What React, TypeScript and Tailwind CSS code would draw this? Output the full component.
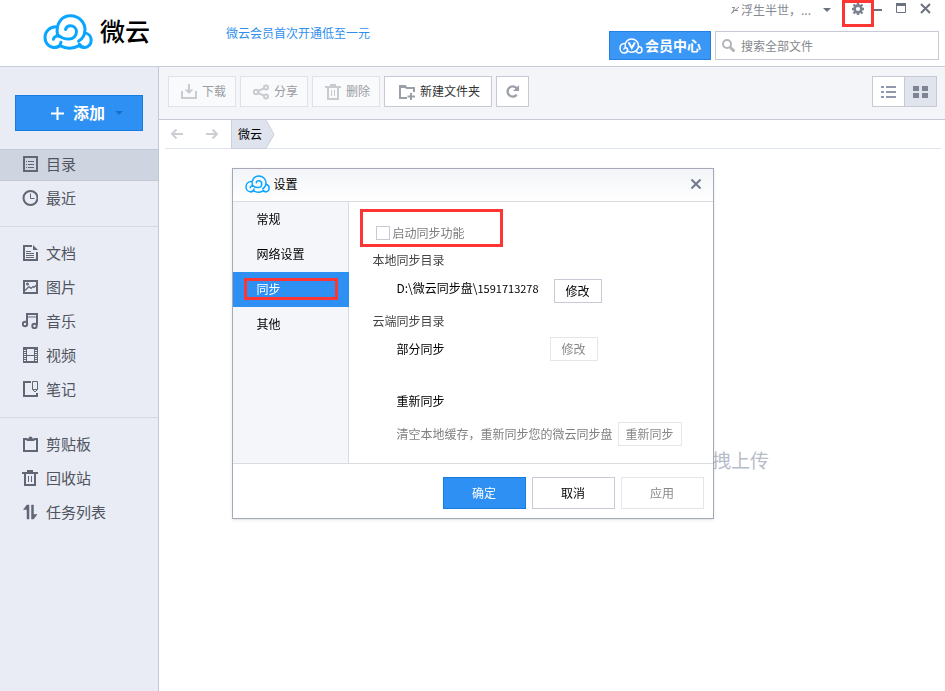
import type { ReactNode } from "react";
import clsx from "clsx";

function CloudLogo({ className }: { className?: string }) {
  return (
    <svg
      className={className}
      viewBox="0 0 50 36"
      fill="none"
      stroke="#0aa5ff"
      strokeWidth="3"
      strokeLinecap="round"
      aria-hidden="true"
    >
      <path d="M13 12.800C6.500 13 2 17.600 2 23.300c0 5.800 4 10.200 9.200 10.200 3.600 0 6.300-2.300 6.800-5.300M16.500 22.500c-1.200-.7-2.600-.8-3.800-.2-1.400.6-2.200 1.700-2.300 3" />
      <path d="M14.500 20.500C12.600 9.500 18.500 1.800 27.500 1.800c8.200 0 14.500 6.200 14.500 14 0 5.300-2.300 9-6.500 11.500" />
      <path d="M22.500 15.500c.6-2.300 2.300-3.800 4.800-3.800 3.600 0 6.200 2.700 6.200 6.100 0 4.400-3.500 7.300-7.800 7.300-4.700 0-9-2.500-11.200-4.600" />
      <path d="M41.500 18.600c4 .8 6.700 3.800 6.700 7.600 0 4-2.800 7.200-6.500 7.200-2.500 0-4.200-1.200-5.200-3.200" />
      <path d="M11.200 33.500c2.600 0 4.400-.6 6-1.700 5.500 3.100 13 3.200 18.800-.2 1.500 1.300 3.400 1.900 5.700 1.800" />
    </svg>
  );
}

function VipCloud() {
  return (
    <svg width="24" height="16" viewBox="0 0 24 16" fill="none" stroke="#fff" strokeWidth="1.500" strokeLinecap="round" aria-hidden="true">
      <path d="M5.500 5.500C2.800 5.600 1 7.700 1 10.300 1 13 2.900 15 5.300 15c2 0 3.300-1.300 3.300-2.900 0-1.400-1-2.300-2.100-2.300-.9 0-1.500.5-1.600 1.200" />
      <path d="M6.200 8.500C5.500 4.300 8.600 1 12.600 1s6.900 3 6.900 6.700-3 6.500-6.900 6.500c-1.600 0-3-.4-4.100-1.200" />
      <path d="M19.500 8.800c2 .1 3.500 1.400 3.500 3.200 0 1.700-1.400 3-3.100 3-1.300 0-2.100-.7-2.500-1.700" />
      <path d="M10 5l2.800 5L15.600 5" strokeWidth="2" />
    </svg>
  );
}

function Icon({ children, size = 16 }: { children: ReactNode; size?: number }) {
  return (
    <svg
      className="shrink-0"
      width={size}
      height={size}
      viewBox="0 0 16 16"
      fill="none"
      stroke="currentColor"
      strokeWidth="2"
      aria-hidden="true"
    >
      {children}
    </svg>
  );
}

const trash = (
  <>
    <path d="M0 3h16M5 1h6M3 3v12h10V3" />
    <path d="M6.500 6v6M9.500 6v6" strokeWidth="1" />
  </>
);

const navGroups: { label: string; icon: ReactNode }[][] = [
  [
    {
      label: "目录",
      icon: (
        <>
          <path d="M2 1h13v14H2z" />
          <path d="M4 5.500h1M6 5.500h6M4 8.500h1M6 8.500h6M4 11.500h1M6 11.500h6" strokeWidth="1" />
        </>
      ),
    },
    {
      label: "最近",
      icon: (
        <>
          <circle cx="8.500" cy="8" r="7" strokeWidth="2" />
          <path d="M8.500 3.500v5h4" strokeWidth="1" />
        </>
      ),
    },
  ],
  [
    {
      label: "文档",
      icon: (
        <>
          <path d="M10 1H2v14h13V7" />
          <path d="M11 0l5 5h-5z" fill="currentColor" stroke="none" />
          <path d="M4 6.500h5M4 8.500h8M4 10.500h8M4 12.500h8" strokeWidth="1" />
        </>
      ),
    },
    {
      label: "图片",
      icon: (
        <>
          <path d="M2 2h13v12H2z" />
          <path d="M3 11.500l4-4 2 2 2-2 1 1 3-3" strokeWidth="1.200" />
          <circle cx="5.500" cy="5" r="1.500" fill="currentColor" stroke="none" />
        </>
      ),
    },
    {
      label: "音乐",
      icon: (
        <>
          <path d="M5 11V1h10v11" />
          <path d="M5 4h10" strokeWidth="1" />
          <circle cx="3" cy="11" r="2.200" />
          <circle cx="12.500" cy="13" r="2.200" />
        </>
      ),
    },
    {
      label: "视频",
      icon: (
        <>
          <path d="M1 1h15M1 15h15" />
          <path d="M4.500 1v14M12.500 1v14M4 8.500h9" strokeWidth="1" />
          <path d="M3 2v13M14 2v13" strokeDasharray="1 1" />
          <path d="M1.500 1v14M15.500 1v14" strokeWidth="1" />
        </>
      ),
    },
    {
      label: "笔记",
      icon: (
        <>
          <path d="M9 1H2v14h13v-3" />
          <path d="M10.500 .500h5v8L13 11l-2.500-2.500zM10.500 8.500h5" strokeWidth="1" />
        </>
      ),
    },
  ],
  [
    {
      label: "剪贴板",
      icon: (
        <>
          <path d="M5 3H2v12h13V3h-3" />
          <path d="M4.500 5V2.500h2a2 2 0 0 1 4 0h2V5z" fill="currentColor" stroke="none" />
        </>
      ),
    },
    { label: "回收站", icon: trash },
    {
      label: "任务列表",
      icon: (
        <path
          d="M5 15V1h2v14zM5 1v4.500H1.500zM9.500 1h2v14h-2zM11.500 15v-4.500H15z"
          fill="currentColor"
          stroke="currentColor"
          strokeWidth=".500"
        />
      ),
    },
  ],
];

const settingsTabs = ["常规", "网络设置", "同步", "其他"];

function ToolButton({
  label,
  icon,
  disabled = false,
}: {
  label: string;
  icon: ReactNode;
  disabled?: boolean;
}) {
  return (
    <button
      type="button"
      disabled={disabled}
      className={clsx(
        "flex h-[31px] items-center gap-[5px] border text-xs whitespace-nowrap",
        disabled
          ? "border-[#e0e2e8] bg-[#f9fafc] pr-[9px] pl-3 text-[#9a9ca2]"
          : "border-[#c6cad5] bg-white pr-[11px] pl-[14px] text-[#333]",
      )}
    >
      <span className={disabled ? "text-[#c9cbd1]" : "text-[#9b9fa8]"}>{icon}</span>
      <span className="pb-[2px]">{label}</span>
    </button>
  );
}

function SmallButton({ label, disabled = false }: { label: string; disabled?: boolean }) {
  return (
    <button
      type="button"
      disabled={disabled}
      className={clsx(
        "h-6 shrink-0 border bg-white px-[7px] text-xs",
        label.length === 2 && "w-12",
        disabled ? "border-[#e4e6ea] text-[#888]" : "border-[#c6cad5] text-black",
      )}
    >
      {label}
    </button>
  );
}

function Header() {
  return (
    <header className="flex h-[67px] justify-between border-b border-[#c8ccd8] bg-white">
      <div className="flex items-center">
        <div className="flex items-center gap-[7px] pb-[3px] pl-[43px]">
          <CloudLogo className="h-9 w-[50px]" />
          <h1 className="pb-[3px] text-[25px] leading-8 font-medium text-black">微云</h1>
        </div>
        <a href="#vip" className="ml-[76px] text-xs text-[#2f8fee]">
          微云会员首次开通低至一元
        </a>
      </div>

      <div className="flex flex-col items-end pr-[6px]">
        <div className="flex h-[27px] items-start pr-2 text-[#6c7282]">
          <button type="button" className="mr-[11px] flex h-5 items-center text-xs text-[#858993]">
            <svg width="10" height="10" viewBox="0 0 10 10" fill="none" stroke="currentColor" className="mr-px" aria-hidden="true">
              <path d="M2 2.500h2.500L2.500 8M1 8.500L9 2M5 5.500h3" />
            </svg>
            浮生半世，...
            <svg width="8" height="4" viewBox="0 0 8 4" fill="#6c7282" className="ml-3" aria-hidden="true">
              <path d="M0 0h8L4 4z" />
            </svg>
          </button>
          <button
            type="button"
            aria-label="设置"
            className="flex h-[27px] w-8 items-start justify-center border-[3px] border-[#fc3535] text-[#7c8190]"
          >
            <svg width="12" height="12" viewBox="0 0 12 12" fill="none" stroke="currentColor" aria-hidden="true">
              <circle cx="6" cy="6" r="3.400" strokeWidth="2.600" />
              <path
                d="M6 0v2M6 10v2M0 6h2M10 6h2M1.500 1.500l1.700 1.700M8.800 8.800l1.700 1.700M1.500 10.500l1.700-1.700M8.800 3.200l1.700-1.700"
                strokeWidth="2.400"
              />
            </svg>
          </button>
          <button type="button" aria-label="最小化" className="mt-[3px]">
            <svg width="8" height="11" viewBox="0 0 8 11" fill="currentColor" aria-hidden="true">
              <path d="M0 6h8v2H0z" />
            </svg>
          </button>
          <button type="button" aria-label="最大化" className="mt-[3px] ml-[14px]">
            <svg width="10" height="11" viewBox="0 0 10 11" fill="none" stroke="currentColor" aria-hidden="true">
              <path d="M.500 .500h9v9h-9z" />
              <path d="M0 1.500h10" strokeWidth="3" />
            </svg>
          </button>
          <button type="button" aria-label="关闭" className="mt-[3px] ml-[14px]">
            <svg width="11" height="11" viewBox="0 0 11 11" fill="none" stroke="currentColor" strokeWidth="2" aria-hidden="true">
              <path d="M1 1l9 9M10 1l-9 9" />
            </svg>
          </button>
        </div>

        <div className="mt-1 flex gap-1">
          <button
            type="button"
            className="flex h-[29px] w-[102px] items-center justify-center gap-[2px] border border-[#2381e6] bg-[#3b97f6] text-sm font-bold text-white"
          >
            <VipCloud />
            <span className="pb-[2px]">会员中心</span>
          </button>
          <label className="flex h-[29px] w-56 items-center gap-[6px] border border-[#c6cad5] bg-white px-[6px]">
            <svg width="13" height="13" viewBox="0 0 13 13" fill="none" stroke="#b3b5ba" strokeWidth="2" aria-hidden="true">
              <circle cx="5" cy="5" r="4" />
              <path d="M8 8l4.500 4.500" strokeWidth="3" />
            </svg>
            <input
              type="search"
              aria-label="搜索全部文件"
              placeholder="搜索全部文件"
              className="min-w-0 flex-1 text-xs outline-none placeholder:text-[#85878c]"
            />
          </label>
        </div>
      </div>
    </header>
  );
}

function Sidebar() {
  return (
    <aside className="w-[159px] shrink-0 border-r border-[#c3c7d2] bg-[#e9ecf4] pt-7">
      <div className="px-[15px]">
        <button
          type="button"
          className="flex h-9 w-full items-center justify-center border border-[#187be0] bg-[#2f90f3] pl-4 text-base font-bold text-white"
        >
          <svg width="13" height="13" viewBox="0 0 13 13" stroke="#fff" strokeWidth="2" className="mr-[9px]" aria-hidden="true">
            <path d="M6.500 0v13M0 6.500h13" />
          </svg>
          <span className="pb-[2px]">添加</span>
          <svg width="8" height="4" viewBox="0 0 8 4" fill="#1a6fca" className="ml-[10px]" aria-hidden="true">
            <path d="M0 0h8L4 4z" />
          </svg>
        </button>
      </div>

      <nav className="mt-[18px] text-[15px] text-[#50545f]">
        {navGroups.map((group, i) => (
          <ul
            key={group[0].label}
            className={clsx(
              "pb-[11px]",
              i > 0 && "pt-[9px]",
              i < navGroups.length - 1 && "border-b border-[#d5d9e2]",
            )}
          >
            {group.map((item) => (
              <li key={item.label}>
                <a
                  href="#nav"
                  className={clsx(
                    "flex items-center gap-2 pl-[22px]",
                    item.label === "目录"
                      ? "h-8 border-y border-[#c3c9d6] bg-[#ced4e0] pb-[2px]"
                      : "h-[34px]",
                  )}
                >
                  <span className="text-[#626775]">
                    <Icon>{item.icon}</Icon>
                  </span>
                  {item.label}
                </a>
              </li>
            ))}
          </ul>
        ))}
      </nav>
    </aside>
  );
}

function Toolbar() {
  return (
    <div className="flex h-[53px] justify-between border-b border-[#c6cad5] bg-[#f4f5f9] pt-[9px] pr-2 pl-[9px]">
      <div className="flex gap-1">
        <ToolButton
          disabled
          label="下载"
          icon={
            <Icon>
              <path d="M1 7v7h14V7" />
              <path d="M8 0v7" />
              <path d="M3.500 5.500h9L8 10z" fill="currentColor" stroke="none" />
            </Icon>
          }
        />
        <ToolButton
          disabled
          label="分享"
          icon={
            <Icon>
              <circle cx="3" cy="8" r="2.200" />
              <circle cx="13" cy="3.500" r="2" />
              <circle cx="13" cy="12.500" r="2" />
              <path d="M5 7l6-2.700M5 9l6 2.700" />
            </Icon>
          }
        />
        <ToolButton disabled label="删除" icon={<Icon>{trash}</Icon>} />
        <ToolButton
          label="新建文件夹"
          icon={
            <Icon>
              <path d="M8 14H1V2h5l1.500 2H15v4" />
              <path d="M0 1h6l2 3H0z" fill="currentColor" stroke="none" />
              <path d="M12 9v7M8.500 12.500h7.500" />
            </Icon>
          }
        />
        <button
          type="button"
          aria-label="刷新"
          className="flex h-[31px] w-[33px] items-center justify-center border border-[#c6cad5] bg-white text-[#9b9fa8]"
        >
          <Icon size={15}>
            <path d="M12.500 11.500a5.500 5.500 0 1 1 0-7" strokeWidth="2.500" />
            <path d="M15 1v6.500H8.500z" fill="currentColor" stroke="none" />
          </Icon>
        </button>
      </div>

      <div className="flex h-[31px] border border-[#c6cad5]">
        <button type="button" aria-label="列表视图" className="flex w-[31px] items-center justify-center bg-white">
          <svg width="15" height="12" viewBox="0 0 15 12" fill="#8f98ac" aria-hidden="true">
            <path d="M0 0h3v2H0zM5 0h10v2H5zM0 5h3v2H0zM5 5h10v2H5zM0 10h3v2H0zM5 10h10v2H5z" />
          </svg>
        </button>
        <button
          type="button"
          aria-label="网格视图"
          className="flex w-8 items-center justify-center border-l border-[#c6cad5] bg-[#dfe4ed]"
        >
          <svg width="15" height="12" viewBox="0 0 15 12" fill="#7d8494" aria-hidden="true">
            <path d="M0 0h6v5H0zM9 0h6v5H9zM0 7h6v5H0zM9 7h6v5H9z" />
          </svg>
        </button>
      </div>
    </div>
  );
}

function Breadcrumb() {
  return (
    <div className="mr-1 ml-[6px] flex h-[29px] border-b border-[#dee4eb] pl-[6px] text-[#ccced4]">
      <button type="button" aria-label="后退">
        <svg width="12" height="10" viewBox="0 0 12 10" fill="none" stroke="currentColor" strokeWidth="2" aria-hidden="true">
          <path d="M12 5H1M5.500 .500L1 5l4.500 4.500" />
        </svg>
      </button>
      <button type="button" aria-label="前进" className="ml-[23px]">
        <svg width="12" height="10" viewBox="0 0 12 10" fill="none" stroke="currentColor" strokeWidth="2" aria-hidden="true">
          <path d="M0 5h11M6.500 .500L11 5 6.500 9.500" />
        </svg>
      </button>
      <a href="#root" className="ml-[13px] flex h-[29px] text-xs text-black">
        <span className="flex items-center border-b border-l border-[#c9cfdc] bg-[#dfe3ed] pl-[6px]">微云</span>
        <svg width="13" height="29" viewBox="0 0 13 29" fill="#dfe3ed" aria-hidden="true">
          <path d="M0 0h4l8 14.500L4 29H0z" />
          <path d="M4 0l8 14.500L4 28.500H0" fill="none" stroke="#c9cfdc" />
        </svg>
      </a>
    </div>
  );
}

function SettingsDialog() {
  return (
    <div className="fixed inset-0 flex items-center justify-center pb-1">
      <div
        role="dialog"
        aria-labelledby="settings-title"
        className="w-[482px] border border-[#a3a9b8] bg-white text-xs text-black shadow-sm"
      >
        <div className="flex h-[33px] items-center border-b border-[#d9dbe0] bg-linear-to-b from-[#f2f4f7] to-white px-3 pb-[2px]">
          <CloudLogo className="h-[18px] w-[25px]" />
          <h2 id="settings-title" className="ml-1">
            设置
          </h2>
          <button type="button" aria-label="关闭设置" className="ml-auto">
            <svg width="10" height="10" viewBox="0 0 10 10" fill="none" stroke="#717888" strokeWidth="2" aria-hidden="true">
              <path d="M.500 .500l9 9M9.500 .500l-9 9" />
            </svg>
          </button>
        </div>

        <div className="flex h-[262px] border-b border-[#d9dbe0]">
          <div role="tablist" className="flex w-[116px] shrink-0 flex-col bg-[#f5f6fa]">
            {settingsTabs.map((tab) => {
              const active = tab === "同步";
              return (
                <button
                  key={tab}
                  type="button"
                  role="tab"
                  aria-selected={active}
                  className={clsx(
                    "flex h-[35px] items-center pb-[2px] text-left",
                    active ? "bg-[#2f90f3] px-[11px] text-white" : "border-r border-[#d9dbe0] pl-6",
                  )}
                >
                  {active ? (
                    <span className="flex h-[22px] flex-1 items-center border-[3px] border-[#fc3535] pl-[10px]">
                      {tab}
                    </span>
                  ) : (
                    tab
                  )}
                </button>
              );
            })}
            <div className="flex-1 border-r border-[#d9dbe0]" />
          </div>

          <div className="flex-1 pt-[7px] pl-6">
            <label className="-ml-[13px] flex h-[38px] w-[143px] items-center gap-[3px] border-[3px] border-[#fc3535] pt-[9px] pl-[13px] text-[#7d7d7d]">
              <input type="checkbox" className="h-[14px] w-[14px] appearance-none border border-[#c6c9d6] bg-white" />
              启动同步功能
            </label>

            <h3 className="flex h-[25px] items-center text-[#444]">本地同步目录</h3>
            <div className="flex h-[37px] items-center pl-6">
              <span className="w-[157px] pb-[6px]">
                D:\微云同步盘\<span className="text-[11px]">1591713278</span>
              </span>
              <SmallButton label="修改" />
            </div>

            <h3 className="flex h-6 items-center text-[#444]">云端同步目录</h3>
            <div className="flex h-8 items-center pl-6">
              <span className="w-[153px]">部分同步</span>
              <SmallButton label="修改" disabled />
            </div>

            <p className="mt-6 flex h-6 items-center pl-6">重新同步</p>
            <div className="flex h-[41px] items-center gap-[5px] pl-6 text-[#808080]">
              <span className="whitespace-nowrap">清空本地缓存，重新同步您的微云同步盘</span>
              <SmallButton label="重新同步" disabled />
            </div>
          </div>
        </div>

        <div className="flex h-[54px] items-center justify-end gap-[6px] pt-2 pr-[9px] pb-1">
          <button type="button" className="h-8 w-[83px] border border-[#187be0] bg-[#2f90f3] text-white">
            确定
          </button>
          <button type="button" className="h-8 w-[83px] border border-[#c6cad5] bg-white">
            取消
          </button>
          <button type="button" disabled className="h-8 w-[83px] border border-[#e4e6ea] bg-white text-[#888]">
            应用
          </button>
        </div>
      </div>
    </div>
  );
}

export default function App() {
  return (
    <div className="flex min-h-screen flex-col bg-white font-['Noto_Sans_CJK_SC',sans-serif]">
      <Header />
      <div className="flex flex-1">
        <Sidebar />
        <main className="flex min-w-0 flex-1 flex-col">
          <Toolbar />
          <Breadcrumb />
          <div className="flex flex-1 items-center justify-center pt-20 pl-[377px]">
            <p className="text-[19px] whitespace-nowrap text-[#b8bcc8]">拽上传</p>
          </div>
        </main>
      </div>
      <SettingsDialog />
    </div>
  );
}
